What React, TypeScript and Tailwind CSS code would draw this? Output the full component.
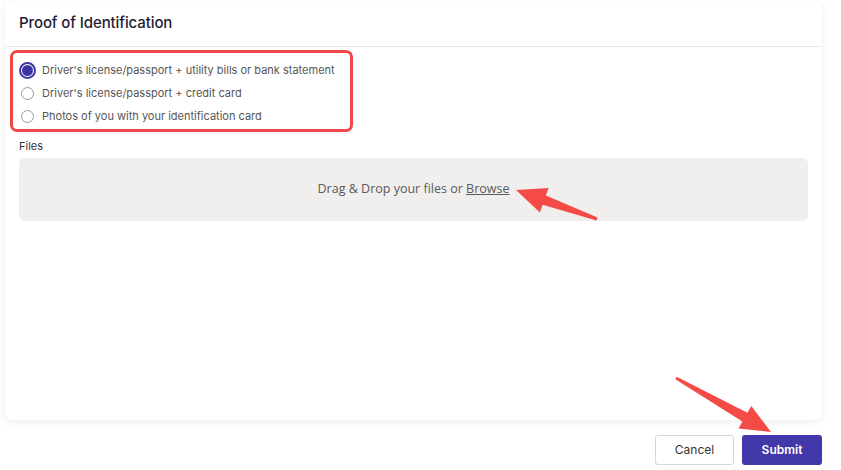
import React from "react"

function arrowPoints(x1: number, y1: number, x2: number, y2: number) {
  const dx = x2 - x1
  const dy = y2 - y1
  const len = Math.sqrt(dx * dx + dy * dy)
  const ux = dx / len
  const uy = dy / len
  const nx = -uy
  const ny = ux
  const headLen = 30
  const headW = 13
  const tailW = 1.5
  const neckW = 5
  const bx = x2 - ux * headLen
  const by = y2 - uy * headLen
  const pts = [
    [x1 + nx * tailW, y1 + ny * tailW],
    [bx + nx * neckW, by + ny * neckW],
    [bx + nx * headW, by + ny * headW],
    [x2, y2],
    [bx - nx * headW, by - ny * headW],
    [bx - nx * neckW, by - ny * neckW],
    [x1 - nx * tailW, y1 - ny * tailW],
  ]
  return pts.map((p) => p[0].toFixed(1) + "," + p[1].toFixed(1)).join(" ")
}

const options = [
  "Driver's license/passport + utility bills or bank statement",
  "Driver's license/passport + credit card",
  "Photos of you with your identification card",
]

export default function App() {
  return (
    <div className="relative w-[841px] h-[470px] bg-white" style={{ fontFamily: "Inter, 'Noto Sans', sans-serif" }}>
      <div className="pl-[5px] pr-[19px] pt-px">
        <div className="h-[419px] bg-white rounded-lg shadow-[0_2px_8px_rgba(0,0,0,0.08)] flex flex-col">
          <div className="h-[46px] flex items-center px-[14px] border-b border-[#e8e8e8]">
            <h1 className="text-[15px] font-medium text-[#1f1c33] tracking-[-0.1px]">Proof of Identification</h1>
          </div>
          <div className="pt-[3px] pl-[5px]">
            <div className="w-[343px] h-[82px] border-[3px] border-[#f04848] rounded-[7px] flex flex-col gap-[7px] pt-[9px] pl-[5px]">
              {options.map((o, i) => (
                <label key={o} className="flex items-center h-[16px] text-[11px] text-[#565656]">
                  <span className="w-[18px] flex justify-center mr-[6px]">
                    {i === 0 ? (
                      <span className="w-[17px] h-[17px] rounded-full border-2 border-[#3d35a3] flex items-center justify-center">
                        <span className="w-[11px] h-[11px] rounded-full bg-[#3d35a3]" />
                      </span>
                    ) : (
                      <span className="w-[13px] h-[13px] rounded-full border border-[#9a9a9a] bg-white" />
                    )}
                  </span>
                  {o}
                </label>
              ))}
            </div>
          </div>
          <div className="px-[14px] pt-[7px]">
            <div className="text-[11px] text-[#333] leading-[14px]">Files</div>
            <div
              className="mt-[5px] h-[63px] rounded-[6px] bg-[#f0efee] flex items-center justify-center text-[12.5px] text-[#5a5a5a]"
              style={{ fontFamily: "'Open Sans', sans-serif" }}
            >
              Drag &amp; Drop your files or&nbsp;<span className="underline">Browse</span>
            </div>
          </div>
        </div>
      </div>
      <div className="flex justify-end gap-2 pr-[19px] pt-[15px]">
        <button className="w-[79px] h-[30px] rounded-[3px] border border-[#d6d6d6] bg-white text-[12px] text-[#333]">Cancel</button>
        <button className="w-[80px] h-[30px] rounded-[3px] bg-[#4338a9] text-[12px] font-semibold text-white">Submit</button>
      </div>
      <svg className="absolute inset-0 pointer-events-none" width="841" height="470">
        <polygon points={arrowPoints(597, 219, 516, 190)} fill="#f44b47" />
        <polygon points={arrowPoints(676, 378, 771, 432)} fill="#f44b47" />
      </svg>
    </div>
  )
}
